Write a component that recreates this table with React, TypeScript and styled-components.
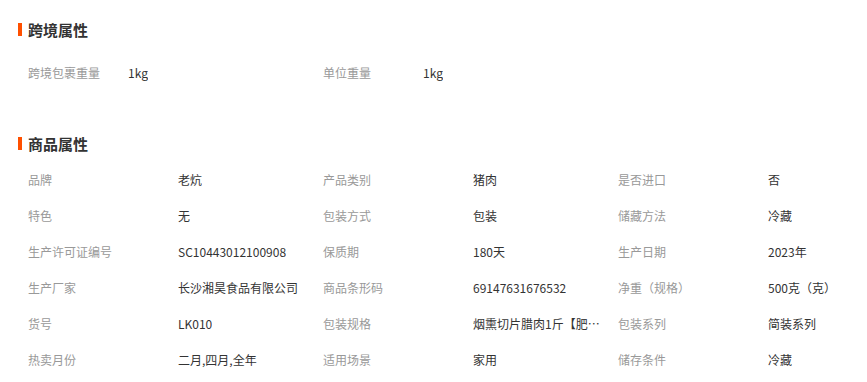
import React from "react";
import styled, { createGlobalStyle } from "styled-components";

const crossBorder = [
  { label: "跨境包裹重量", value: "1kg" },
  { label: "单位重量", value: "1kg" },
];

const goods = [
  { label: "品牌", value: "老炕" },
  { label: "产品类别", value: "猪肉" },
  { label: "是否进口", value: "否" },
  { label: "特色", value: "无" },
  { label: "包装方式", value: "包装" },
  { label: "储藏方法", value: "冷藏" },
  { label: "生产许可证编号", value: "SC10443012100908" },
  { label: "保质期", value: "180天" },
  { label: "生产日期", value: "2023年" },
  { label: "生产厂家", value: "长沙湘昊食品有限公司" },
  { label: "商品条形码", value: "69147631676532" },
  { label: "净重（规格）", value: "500克（克）" },
  { label: "货号", value: "LK010" },
  { label: "包装规格", value: "烟熏切片腊肉1斤【肥瘦相间】" },
  { label: "包装系列", value: "简装系列" },
  { label: "热卖月份", value: "二月,四月,全年" },
  { label: "适用场景", value: "家用" },
  { label: "储存条件", value: "冷藏" },
];

export default function App() {
  return (
    <>
      <GlobalStyle />
      <Page>
        <Section>
          <Title $gap={17}>跨境属性</Title>
          <AttrGrid>
            {crossBorder.map((item) => (
              <AttrItem key={item.label}>
                <Label $width={100}>{item.label}</Label>
                <Value>{item.value}</Value>
              </AttrItem>
            ))}
          </AttrGrid>
        </Section>

        <Section>
          <Title $gap={10}>商品属性</Title>
          <AttrGrid>
            {goods.map((item) => (
              <AttrItem key={item.label}>
                <Label $width={150}>{item.label}</Label>
                <Value title={item.value}>{item.value}</Value>
              </AttrItem>
            ))}
          </AttrGrid>
        </Section>
      </Page>
    </>
  );
}

const GlobalStyle = createGlobalStyle`
  body {
    margin: 0;
    background: #fff;
    font-family: "Noto Sans CJK SC", "Noto Sans", sans-serif;
  }
`;

const Page = styled.div`
  padding: 21px 0 0 18px;
`;

const Section = styled.section`
  & + & {
    margin-top: 45px;
  }
`;

const Title = styled.h3<{ $gap: number }>`
  margin: 0 0 ${(props) => props.$gap}px;
  display: flex;
  align-items: center;
  height: 16px;
  font-size: 15px;
  font-weight: bold;
  color: #333;

  &::before {
    content: "";
    width: 4px;
    height: 13px;
    margin-right: 6px;
    background: #ff5000;
  }
`;

const AttrGrid = styled.div`
  display: grid;
  grid-template-columns: 295px 295px 1fr;
  padding-left: 10px;
`;

const AttrItem = styled.div`
  display: flex;
  align-items: center;
  height: 36px;
  font-size: 12px;
`;

const Label = styled.span<{ $width: number }>`
  flex: none;
  width: ${(props) => props.$width}px;
  color: #999;
  white-space: nowrap;
`;

const Value = styled.span`
  max-width: 128px;
  color: #333;
  white-space: nowrap;
  overflow: hidden;
  text-overflow: ellipsis;
`;
